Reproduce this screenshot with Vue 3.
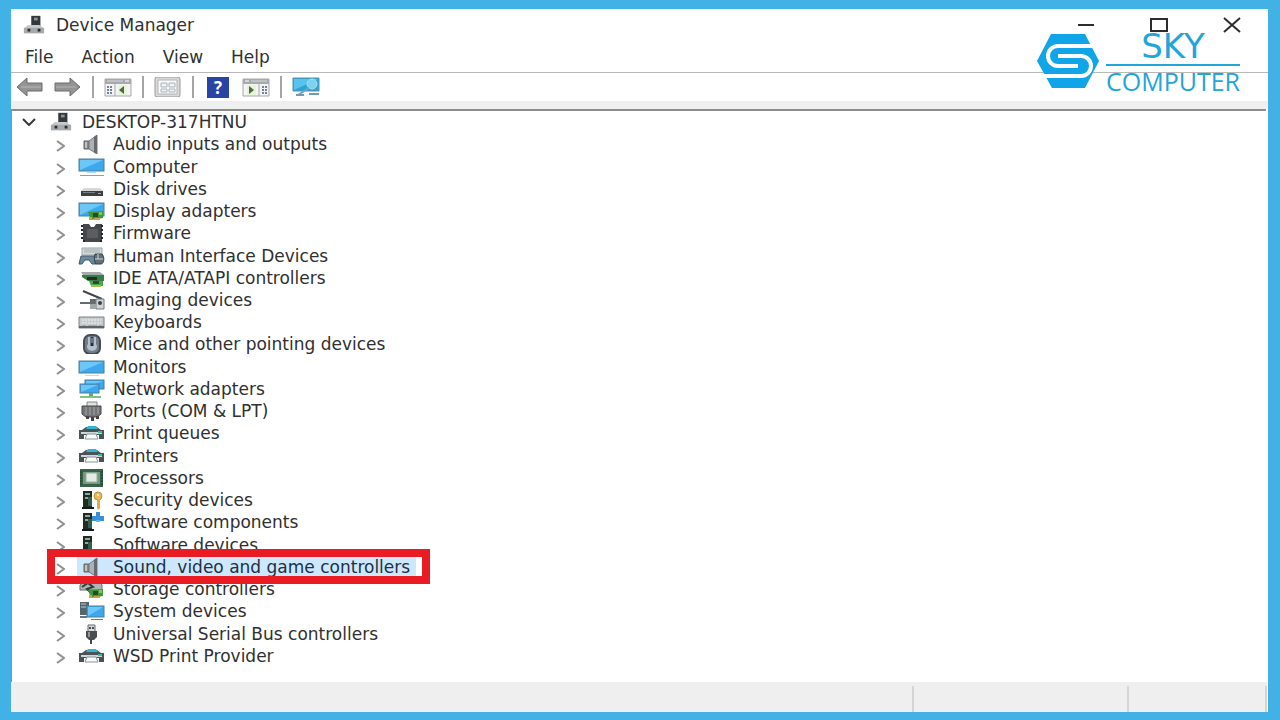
<script setup>
import { ref } from 'vue'

const screen = (x, y, w, h) =>
  `<rect x="${x}" y="${y}" width="${w}" height="${h}" fill="#3da9ec" stroke="#4b7f9f"/><path d="M${x + 1} ${y + h - 1}V${y + 1}H${x + w - 1}Z" fill="#6cc6f8"/>`
const tower = `<path d="M5 1h9v16H5z" fill="#1e2b26"/><path d="M7 3h5v2H7zM7 7h3v2H7z" fill="#8fa89a"/><path d="M10 7h4v9h-4z" fill="#345f49"/><path d="M4 17h12v2H4z" fill="#15191a"/>`
const printer = `<path d="M4 7l4-3h11l4 3z" fill="#4a5559"/><path d="M8 6l2-3h8l2 3z" fill="#32b5d0"/><path d="M1 7h25v9h-5V12H6v4H1z" fill="#4b5357"/><path d="M3 9h21v2H3z" fill="#cdd8da"/><path d="M9 11h9l2 5H7z" fill="#f8fafa" stroke="#8b9698"/><path d="M20 8h4v2h-4z" fill="#39b99d"/>`
const speaker = `<path d="M6 7h5v8H6z" fill="#84888c" stroke="#606367"/><path d="M11 7l8-6v19l-8-5z" fill="#aeb1b4" stroke="#777b80"/><path d="M16 3l3-2v19l-3-2z" fill="#666a6e"/><path d="M7 8h2v6H7z" fill="#c0c2c4"/>`
const card = `<path d="M10 11l15-1v7l-12 2z" fill="#3e963e"/><path d="M15 12h5v4h-5z" fill="#254c25"/><path d="M11 16h3v3h-3zM16 17h6v2h-6z" fill="#c9a442"/><path d="M21 11h3v3h-3z" fill="#83c74d"/>`

const icons = {
  audio: speaker,
  computer: screen(1, 2, 25, 12) + `<path d="M9 15h9v1H9z" fill="#a6ddf7"/><path d="M2 18h24v1H2z" fill="#929da5"/>`,
  disk: `<path d="M6 9h16l3 3H3z" fill="#d5d7d8"/><path d="M3 12h22v5H3z" fill="#3b4043"/><path d="M5 13h12v1H5z" fill="#7b8183"/><path d="M20 14h3v1h-3z" fill="#59d57b"/>`,
  display: screen(1, 2, 25, 13) + card,
  firmware: `<path d="M5 1h6l2 3h3l2-3h6v18H5z" fill="#45484a"/><path d="M3 2h2v2H3zM3 6h2v2H3zM3 10h2v2H3zM3 14h2v2H3zM23 2h2v2h-2zM23 6h2v2h-2zM23 10h2v2h-2zM23 14h2v2h-2zM5 17h2v2H5zM22 17h2v2h-2z" fill="#25282a"/><path d="M9 6h11v9H9z" fill="#5b5e60"/>`,
  human: `<path d="M4 2h20v7H4z" fill="#d6dcde" stroke="#9ca5a9"/><path d="M6 4h16M6 6h16" stroke="#a1aaae"/><path d="M3 10h13l2 8h-4l-3-4H7l-3 4H1z" fill="#6c899a" stroke="#415c6b"/><path d="M17 8h7c3 3 2 10-1 10h-5c-2-2-2-7-1-10z" fill="#637078" stroke="#354249"/><path d="M20 8v5M17 13h8" stroke="#ccd4d8"/>`,
  ide: `<path d="M3 4h19l4 3H5z" fill="#a4aaa7"/><path d="M4 7h22v6H10l-6-4z" fill="#397c48"/><path d="M9 9h10v3H9z" fill="#222f27"/><path d="M11 13h14v5H13z" fill="#4ca64b"/><path d="M15 13h6v3h-6z" fill="#294c2e"/><path d="M13 17h10v2H13z" fill="#acba54"/>`,
  imaging: `<path d="M5 1l19 8" stroke="#424648" stroke-width="2"/><path d="M2 12h10v-3h6v10h-6v-5H2z" fill="#666d71"/><path d="M18 9h8v10h-8z" fill="#d0d3d4" stroke="#747b7e"/><circle cx="22" cy="13" r="2" fill="#35404a"/><path d="M12 14h6v5h-6z" fill="#a2a8aa"/>`,
  keyboard: `<path d="M1 5h25v11H1z" fill="#c7cbcd" stroke="#7b8285"/><path d="M4 8h19M4 11h19" stroke="#f2f4f4" stroke-dasharray="2 1"/><path d="M4 14h4M10 14h9M21 14h3" stroke="#858c8f"/><path d="M1 15h25" stroke="#5c6366" stroke-width="2"/>`,
  mouse: `<rect x="6" y="1" width="16" height="19" rx="6" fill="#747d87" stroke="#454d56" stroke-width="2"/><path d="M10 3v7c-2 3-1 6 4 7 5-1 6-4 4-7V3z" fill="#b4c0cb"/><path d="M14 3v9" stroke="#252c35" stroke-width="3"/><path d="M14 4v5" stroke="#9bc5e8"/>`,
  monitor: screen(1, 4, 25, 12) + `<path d="M7 18h14v1H7z" fill="#cadbe2"/>`,
  network: screen(7, 1, 19, 9) + screen(2, 5, 19, 9) + `<path d="M11 14h4v3h8v2H2v-2h9z" fill="#5fae68"/><path d="M2 18h21" stroke="#a2d1a6"/>`,
  port: `<path d="M9 1h10v5H9z" fill="#e0e1e1" stroke="#858687"/><path d="M4 5h19v8l-4 3H8l-4-3z" fill="#737477" stroke="#48494b"/><path d="M8 6v8M12 6v8M16 6v8M20 6v7" stroke="#a6a7aa"/><path d="M8 15h3v3H8zM13 16h3v4h-3zM18 15h3v3h-3z" fill="#4a4145"/>`,
  printer,
  processor: `<path d="M2 1h23v18H2z" fill="#386349"/><path d="M5 4h17v12H5z" fill="#729885"/><path d="M8 5h11v9H8z" fill="#e3ebe5" stroke="#9aac9f"/><path d="M3 3v14M24 3v14" stroke="#183d2a" stroke-dasharray="2 1"/>`,
  security: tower + `<circle cx="20" cy="6" r="4" fill="#e7bc58" stroke="#bd912f"/><path d="M19 9h3v9l-2 2-1-2z" fill="#dbad44"/><circle cx="20" cy="5" r="1" fill="#fff7da"/>`,
  component: tower + `<path d="M14 4h4V0h4v4h4v5H14z" fill="#3a8fdb"/><path d="M18 8h4v2h-4z" fill="#66b0ed"/>`,
  software: tower,
  storage: `<path d="M2 6l5-4h14l3 4v5H2z" fill="#aeb5b4" stroke="#69706e"/><path d="M4 8l6-4 5 4-6 2 6 6" stroke="#333c38" stroke-width="2" fill="none"/>` + card,
  system: `<path d="M2 1h9v13H2z" fill="#52666b"/><path d="M3 3h5M3 6h5" stroke="#b7cdd0"/>` + screen(9, 5, 17, 11) + `<path d="M2 15h7v2H2zM13 18h12v1H13z" fill="#66777d"/>`,
  usb: `<path d="M10 1h7v7h-7z" fill="#d8dadb" stroke="#66696b"/><path d="M11 3h2v2h-2zM14 3h2v2h-2z" fill="#4b4e50"/><path d="M8 7h11v6l-3 3h-5l-3-3z" fill="#4b4e50"/><path d="M11 8v5" stroke="#93979a" stroke-width="2"/><path d="M13 15v5" stroke="#46494b" stroke-width="2"/>`
}

const devices = [
  ['Audio inputs and outputs', 'audio'],
  ['Computer', 'computer'],
  ['Disk drives', 'disk'],
  ['Display adapters', 'display'],
  ['Firmware', 'firmware'],
  ['Human Interface Devices', 'human'],
  ['IDE ATA/ATAPI controllers', 'ide'],
  ['Imaging devices', 'imaging'],
  ['Keyboards', 'keyboard'],
  ['Mice and other pointing devices', 'mouse'],
  ['Monitors', 'monitor'],
  ['Network adapters', 'network'],
  ['Ports (COM & LPT)', 'port'],
  ['Print queues', 'printer'],
  ['Printers', 'printer'],
  ['Processors', 'processor'],
  ['Security devices', 'security'],
  ['Software components', 'component'],
  ['Software devices', 'software'],
  ['Sound, video and game controllers', 'audio'],
  ['Storage controllers', 'storage'],
  ['System devices', 'system'],
  ['Universal Serial Bus controllers', 'usb'],
  ['WSD Print Provider', 'printer']
]
const menus = ['File', 'Action', 'View', 'Help']
const selected = ref('Sound, video and game controllers')

const machine = `<path d="M9 0h10v12H9z" fill="#35383a"/><path d="M12 2h4v3h-4z" fill="#8d9294"/><path d="M5 10h13l5 4v5H1v-5z" fill="#c8cacb"/><path d="M1 13h22v6H1z" fill="#a7aaac"/><path d="M5 14h3v3H5zM16 14h3v3h-3z" fill="#292c2e"/>`
const arrow = `<path d="M1 10l10-9v5h15v8H11v5z" fill="#949494" stroke="#6b6b6b"/><path d="M5 10h20" stroke="#b5b5b5"/>`
const panel = `<path d="M1 2h26v17H1z" fill="#f4f4f2" stroke="#a4a6a7"/><path d="M1 2h26v5H1z" fill="#a6aaad"/><path d="M3 4h16" stroke="#d7d9da"/><path d="M21 4h4" stroke="#fff"/><path d="M3 10h6M3 13h6M3 16h6" stroke="#6d839a" stroke-width="2" stroke-dasharray="2 1"/><path d="M11 7v12" stroke="#a4a6a7"/><path d="M14 8h9v10h-9z" fill="#e8f2dc"/>`
const tools = [
  [
    { name: 'Back', art: arrow },
    { name: 'Forward', art: `<g transform="matrix(-1 0 0 1 27 0)">${arrow}</g>` }
  ],
  [{ name: 'Show or hide console tree', art: panel + `<path d="M20 9v8l-5-4z" fill="#4c6b3a"/>` }],
  [{ name: 'Properties', art: `<rect x="1" y="0" width="25" height="20" rx="2" fill="#d9d9d9" stroke="#999"/><path d="M4 3h19v14H4z" fill="#fafafa" stroke="#b3b3b3"/><path d="M7 6h6v4H7zM15 6h6v4h-6zM7 12h6v3H7zM15 12h6v3h-6z" fill="#eef3f5" stroke="#a8b3ba"/>` }],
  [
    { name: 'Help topics', help: true },
    { name: 'Show or hide action pane', art: `<g transform="matrix(-1 0 0 1 28 0)">${panel}</g><path d="M7 9v8l5-4z" fill="#4c6b3a"/>` }
  ],
  [{ name: 'Scan for hardware changes', art: `<path d="M1 1h26v13H1z" fill="#2ba4d9" stroke="#5b91aa"/><path d="M2 2h24L2 13z" fill="#58c3ec"/><circle cx="20" cy="7" r="5" fill="#7ed2f1" stroke="#a1dff4"/><path d="M17 11L6 18" stroke="#6fa7bd" stroke-width="2"/><path d="M4 18h8M17 17h10" stroke="#6f9bae" stroke-width="2"/>` }]
]
</script>

<template>
  <div class="backdrop">
    <main class="window">
      <header class="title-bar">
        <svg class="title-icon" viewBox="0 0 24 20" aria-hidden="true" v-html="machine"></svg>
        <h1>Device Manager</h1>
        <div class="controls">
          <button type="button" aria-label="Minimize"><svg viewBox="0 0 18 16"><path d="M1 8h16" /></svg></button>
          <button type="button" aria-label="Maximize"><svg viewBox="0 0 18 16"><path d="M1 2h16v12H1z" /></svg></button>
          <button type="button" aria-label="Close"><svg viewBox="0 0 18 16"><path d="M1 1l16 14M17 1L1 15" /></svg></button>
        </div>
      </header>

      <nav class="menu-bar" aria-label="Menu">
        <button v-for="m in menus" :key="m" type="button">{{ m }}</button>
      </nav>

      <div class="tool-bar" role="toolbar" aria-label="Tools">
        <div v-for="(group, i) in tools" :key="i" class="tool-group">
          <button v-for="t in group" :key="t.name" type="button" :aria-label="t.name">
            <span v-if="t.help" class="help">?</span>
            <svg v-else viewBox="0 0 28 20" v-html="t.art"></svg>
          </button>
        </div>
      </div>

      <section class="tree" aria-label="Devices">
        <div class="row root">
          <button type="button" class="toggle" aria-label="Collapse DESKTOP-317HTNU">
            <svg class="open" viewBox="0 0 14 8"><path d="M1 1l6 6 6-6" /></svg>
          </button>
          <svg class="root-icon" viewBox="0 0 24 20" aria-hidden="true" v-html="machine"></svg>
          <span class="label">DESKTOP-317HTNU</span>
        </div>
        <div
          v-for="[name, icon] in devices"
          :key="name"
          class="row"
          :class="{ selected: name === selected }"
          @click="selected = name"
        >
          <button type="button" class="toggle" :aria-label="'Expand ' + name">
            <svg class="closed" viewBox="0 0 9 12"><path d="M1 1l7 5-7 5" /></svg>
          </button>
          <span class="entry">
            <svg class="icon" viewBox="0 0 27 20" aria-hidden="true" v-html="icons[icon]"></svg>
            <span class="label">{{ name }}</span>
          </span>
        </div>
      </section>

      <footer class="status-bar"><span></span><span></span><span></span></footer>

      <div class="brand">
        <svg viewBox="0 0 62 54" aria-hidden="true">
          <path d="M14 0h34l14 27-14 27H15L0 27z" fill="#10a5e8" />
          <path d="M64 12H21a10 10 0 0 0 0 20h20" fill="none" stroke="#fff" stroke-width="4" />
          <path d="M21 22h23a10 10 0 0 1 0 20H-2" fill="none" stroke="#fff" stroke-width="4" />
        </svg>
        <div class="brand-name">
          <span class="sky">SKY</span>
          <span class="comp">COMPUTER</span>
        </div>
      </div>
    </main>
  </div>
</template>

<style>
body { margin: 0; }
</style>

<style scoped>
.backdrop {
  box-sizing: border-box;
  display: flex;
  min-height: 100vh;
  padding: 9px 12px 8px 11px;
  background: #42b2e6;
  font-family: "DejaVu Sans", sans-serif;
  font-size: 17px;
  color: #303030;
}
.window {
  position: relative;
  display: flex;
  flex: 1;
  flex-direction: column;
  background: #fff;
}
button {
  padding: 0;
  border: 0;
  background: none;
  color: inherit;
  font: inherit;
}
svg { display: block; flex: none; }
.title-bar { display: flex; align-items: center; height: 32px; padding-left: 12px; }
.title-icon { width: 22px; height: 20px; }
h1 { margin: 0 0 0 11px; font-size: 17px; font-weight: 400; }
.controls { display: flex; height: 100%; margin-left: auto; }
.controls button { display: grid; place-items: center; width: 73px; }
.controls svg { width: 18px; height: 16px; fill: none; stroke: #2c2c2c; stroke-width: 2; }
.menu-bar { display: flex; height: 31px; border-bottom: 1px solid #b8b8b8; }
.menu-bar button { padding: 0 14px; }
.tool-bar {
  display: flex;
  height: 28px;
  border-bottom: 8px solid #efefef;
}
.tool-group { display: flex; align-items: center; }
.tool-group + .tool-group::before {
  content: "";
  width: 2px;
  height: 22px;
  margin: 0 5px;
  background: #a5a5a5;
}
.tool-group button { display: grid; place-items: center; width: 38px; height: 28px; }
.tool-group svg { width: 28px; height: 20px; }
.help {
  width: 22px;
  height: 21px;
  background: #2845a5;
  color: #fff;
  font: 700 17px/21px "Open Sans", sans-serif;
}
.tree {
  display: flex;
  flex: 1;
  flex-direction: column;
  margin-right: 2px;
  padding: 0 0 15px 1px;
  border-top: 2px solid #8c8c8c;
  border-left: 1px solid #7f99a8;
}
.row {
  position: relative;
  display: flex;
  flex: 1;
  align-items: center;
  align-self: flex-start;
  min-height: 22px;
  padding-left: 34px;
}
.root { padding-left: 3px; }
.toggle { display: grid; place-items: center; width: 26px; height: 20px; }
.toggle svg { fill: none; stroke: #8f8f8f; stroke-width: 2; }
.closed { width: 9px; height: 12px; margin-top: 4px; }
.toggle .open { width: 14px; height: 8px; stroke: #3a3a3a; }
.root-icon { width: 22px; height: 20px; margin: 0 10px 0 8px; }
.entry { display: flex; align-items: center; align-self: stretch; margin-left: 4px; padding: 0 6px 0 1px; }
.icon { width: 27px; height: 20px; margin-right: 8px; }
.label { line-height: 20px; white-space: nowrap; }
.selected { z-index: 1; background: #fff; }
.selected .entry { background: #cde7fc; color: #1d3046; }
.selected::after {
  content: "";
  position: absolute;
  inset: -7px -14px -6px 34px;
  border: 8px solid #e91c24;
}
.status-bar {
  display: grid;
  grid-template-columns: 1fr 215px 138px;
  height: 26px;
  margin-right: 1px;
  padding-top: 4px;
  background: #efefef;
}
.status-bar span { border-right: 2px solid #d5d5d5; }
.brand {
  position: absolute;
  top: 20px;
  right: 28px;
  display: flex;
  align-items: flex-start;
  gap: 7px;
  color: #22a5d9;
  font-family: "Open Sans", sans-serif;
}
.brand svg { width: 62px; height: 54px; margin-top: 5px; }
.brand-name { display: flex; flex-direction: column; align-items: center; }
.sky {
  width: 100%;
  border-bottom: 2px solid #22a5d9;
  font-family: "DejaVu Sans", sans-serif;
  font-size: 34px;
  line-height: 35px;
  text-align: center;
}
.comp { font-size: 25px; line-height: 30px; }
</style>
